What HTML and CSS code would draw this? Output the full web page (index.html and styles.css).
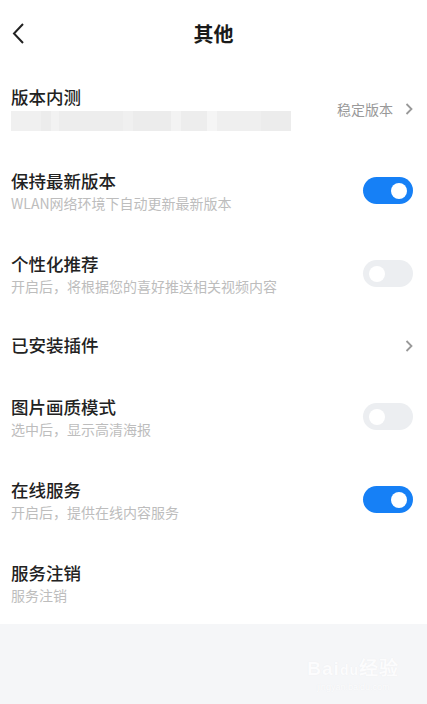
FILE: index.html
```html
<!DOCTYPE html>
<html lang="zh-CN">
<head>
<meta charset="UTF-8">
<meta name="viewport" content="width=device-width, initial-scale=1.0">
<title>其他</title>
<link rel="stylesheet" href="styles.css">
</head>
<body>

<div class="page">
    <header class="topbar">
        <button class="back" aria-label="返回">
            <svg width="12" height="21" viewBox="0 0 12 21"><path d="M11 1 L2 10.5 L11 20" fill="none" stroke="#222" stroke-width="2"/></svg>
        </button>
        <h1>其他</h1>
        <span></span>
    </header>

    <ul class="settings">
        <li class="row">
            <div class="text">
                <div class="title">版本内测</div>
                <div class="blur"></div>
            </div>
            <div class="value">
                稳定版本
                <svg class="chev" width="8" height="12" viewBox="0 0 8 12"><path d="M1.5 1 L6.5 6 L1.5 11" fill="none" stroke="#999" stroke-width="1.8"/></svg>
            </div>
        </li>

        <li class="row">
            <div class="text">
                <div class="title">保持最新版本</div>
                <div class="sub">WLAN网络环境下自动更新最新版本</div>
            </div>
            <span class="switch on"><span class="knob"></span></span>
        </li>

        <li class="row">
            <div class="text">
                <div class="title">个性化推荐</div>
                <div class="sub">开启后，将根据您的喜好推送相关视频内容</div>
            </div>
            <span class="switch"><span class="knob"></span></span>
        </li>

        <li class="row single">
            <div class="text">
                <div class="title">已安装插件</div>
            </div>
            <div class="value">
                <svg class="chev" width="8" height="12" viewBox="0 0 8 12"><path d="M1.5 1 L6.5 6 L1.5 11" fill="none" stroke="#999" stroke-width="1.8"/></svg>
            </div>
        </li>

        <li class="row">
            <div class="text">
                <div class="title">图片画质模式</div>
                <div class="sub">选中后，显示高清海报</div>
            </div>
            <span class="switch"><span class="knob"></span></span>
        </li>

        <li class="row">
            <div class="text">
                <div class="title">在线服务</div>
                <div class="sub">开启后，提供在线内容服务</div>
            </div>
            <span class="switch on"><span class="knob"></span></span>
        </li>

        <li class="row">
            <div class="text">
                <div class="title">服务注销</div>
                <div class="sub">服务注销</div>
            </div>
        </li>
    </ul>

    <footer class="bottom">
        <div class="watermark">
            <div class="wm-logo">Bai<span class="paw">du</span>经验</div>
            <div class="wm-url">jingyan.baidu.com</div>
        </div>
    </footer>
</div>

</body>
</html>
```

FILE: styles.css
```css
body {
    margin: 0;
    padding: 0;
    font-family: "Noto Sans CJK SC", "Noto Sans", sans-serif;
    background-color: #f5f6f8;
    color: #222;
}

.page {
    width: 427px;
    min-height: 704px;
    display: flex;
    flex-direction: column;
}

/* top bar */
.topbar {
    height: 66px;
    display: grid;
    grid-template-columns: 44px 1fr 44px;
    align-items: center;
    background-color: #fff;
}

.back {
    border: none;
    background: none;
    padding: 0 0 0 12px;
    height: 24px;
    display: flex;
    align-items: center;
    justify-content: flex-start;
}

.topbar h1 {
    margin: 0;
    text-align: center;
    font-size: 20px;
    font-weight: 700;
    line-height: 26px;
    color: #1a1a1a;
    padding-top: 2px;
}

/* settings list */
.settings {
    list-style: none;
    margin: 0;
    padding: 0;
    background-color: #fff;
}

.row {
    min-height: 83px;
    display: flex;
    align-items: center;
    justify-content: space-between;
    padding: 0 14px 0 11px;
}

.row.single {
    min-height: 60px;
}

.title {
    font-size: 17.5px;
    font-weight: 500;
    line-height: 24px;
    color: #222;
}

.sub {
    margin-top: 1px;
    font-size: 14px;
    line-height: 18px;
    color: #bdbdbd;
}

/* blurred version line */
.blur {
    margin-top: 2px;
    width: 280px;
    height: 20px;
    background: linear-gradient(to right,
        #f0f0f0 0, #f0f0f0 30px,
        #ececec 30px, #ececec 40px,
        #f2f2f2 40px, #f2f2f2 48px,
        #ededed 48px, #ededed 112px,
        #f0f0f0 112px, #f0f0f0 122px,
        #ececec 122px, #ececec 160px,
        #f3f3f3 160px, #f3f3f3 170px,
        #ededed 170px, #ededed 196px,
        #f5f5f5 196px, #f5f5f5 206px,
        #efefef 206px, #efefef 250px,
        #ececec 250px, #ececec 280px);
}

.value {
    display: flex;
    align-items: center;
    gap: 12px;
    font-size: 14px;
    color: #999;
    margin-top: 2px;
}

.chev {
    display: block;
}

/* switches */
.switch {
    width: 50px;
    height: 27px;
    border-radius: 14px;
    background-color: #eceef1;
    display: flex;
    align-items: center;
    padding: 0 6px;
    box-sizing: border-box;
}

.switch.on {
    background-color: #1680f6;
    justify-content: flex-end;
}

.knob {
    width: 16px;
    height: 16px;
    border-radius: 50%;
    background-color: #fff;
}

/* bottom area */
.bottom {
    flex: 1;
    display: flex;
    justify-content: flex-end;
    padding: 34px 28px 0 0;
}

.watermark {
    text-align: center;
    color: #fcfcfd;
    text-shadow: 0 0 1px #e9eaec;
}

.wm-logo {
    font-family: "Liberation Sans", sans-serif;
    font-size: 19px;
    font-weight: 700;
    line-height: 22px;
    letter-spacing: 1px;
}

.wm-logo .paw {
    font-size: 14px;
}

.wm-url {
    font-family: "Liberation Sans", sans-serif;
    font-size: 9px;
    line-height: 12px;
}
```
